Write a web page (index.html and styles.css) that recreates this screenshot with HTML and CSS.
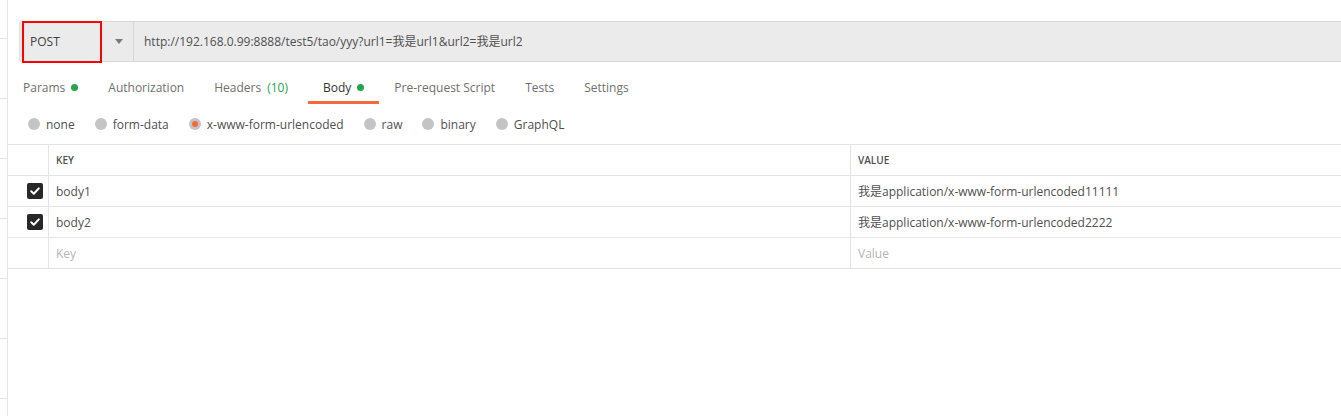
FILE: index.html
```html
<!DOCTYPE html>
<html>
<head>
<meta charset="utf-8">
<link rel="stylesheet" href="styles.css">
</head>
<body>
<div class="app">
  <div class="strip">
    <div class="strip-item first"></div>
    <div class="strip-item"></div>
    <div class="strip-item"></div>
    <div class="strip-item"></div>
    <div class="strip-item"></div>
    <div class="strip-item"></div>
    <div class="strip-item"></div>
  </div>
  <div class="main">
    <div class="urlbar">
      <div class="method">
        <span class="method-text">POST</span>
        <span class="caret"></span>
        <span class="redbox"></span>
      </div>
      <div class="url">http://192.168.0.99:8888/test5/tao/yyy?url1=我是url1&amp;url2=我是url2</div>
    </div>
    <div class="tabs">
      <div class="tab">Params <span class="dot"></span></div>
      <div class="tab">Authorization</div>
      <div class="tab">Headers <span class="green">(10)</span></div>
      <div class="tab active">Body <span class="dot"></span></div>
      <div class="tab">Pre-request Script</div>
      <div class="tab">Tests</div>
      <div class="tab">Settings</div>
    </div>
    <div class="radios">
      <div class="radio"><span class="circle"></span>none</div>
      <div class="radio"><span class="circle"></span>form-data</div>
      <div class="radio"><span class="circle on"></span>x-www-form-urlencoded</div>
      <div class="radio"><span class="circle"></span>raw</div>
      <div class="radio"><span class="circle"></span>binary</div>
      <div class="radio"><span class="circle"></span>GraphQL</div>
    </div>
    <div class="table">
      <div class="row head">
        <div class="c0"></div>
        <div class="c1">KEY</div>
        <div class="c2">VALUE</div>
      </div>
      <div class="row">
        <div class="c0"><span class="check"><svg viewBox="0 0 16 16" width="16" height="16"><path d="M4.2 8.3 L6.8 10.8 L11.8 5.4" fill="none" stroke="#fff" stroke-width="2" stroke-linecap="round" stroke-linejoin="round"/></svg></span></div>
        <div class="c1">body1</div>
        <div class="c2">我是application/x-www-form-urlencoded11111</div>
      </div>
      <div class="row">
        <div class="c0"><span class="check"><svg viewBox="0 0 16 16" width="16" height="16"><path d="M4.2 8.3 L6.8 10.8 L11.8 5.4" fill="none" stroke="#fff" stroke-width="2" stroke-linecap="round" stroke-linejoin="round"/></svg></span></div>
        <div class="c1">body2</div>
        <div class="c2">我是application/x-www-form-urlencoded2222</div>
      </div>
      <div class="row">
        <div class="c0"></div>
        <div class="c1 ph">Key</div>
        <div class="c2 ph">Value</div>
      </div>
    </div>
  </div>
</div>
</body>
</html>
```

FILE: styles.css
```css
* { box-sizing: border-box; }
html, body {
  margin: 0;
  padding: 0;
  background: #fff;
  font-family: "Open Sans", "Noto Sans CJK SC", sans-serif;
  font-size: 12px;
  color: #505050;
}
.app {
  display: flex;
  width: 1341px;
  height: 416px;
  overflow: hidden;
}
.strip {
  width: 8px;
  flex: none;
  border-right: 1px solid #e4e4e4;
}
.strip-item {
  height: 60px;
  border-bottom: 1px solid #e4e4e4;
}
.strip-item.first { height: 39px; }
.main {
  flex: 1;
  min-width: 0;
}
.urlbar {
  margin: 21px 0 0 11px;
  height: 41px;
  display: flex;
  background: #ebebeb;
  border-top: 1px solid #d6d6d6;
  border-bottom: 1px solid #d6d6d6;
  border-left: 1px solid #e0e0e0;
  border-radius: 3px 0 0 3px;
}
.method {
  position: relative;
  width: 114px;
  flex: none;
  display: flex;
  align-items: center;
  padding-left: 10px;
  padding-bottom: 1px;
  border-right: 1px solid #d6d6d6;
}
.method-text {
  color: #404040;
  font-size: 12px;
}
.caret {
  position: absolute;
  left: 95px;
  top: 17px;
  width: 0;
  height: 0;
  border-left: 4px solid transparent;
  border-right: 4px solid transparent;
  border-top: 5px solid #7a7a7a;
}
.redbox {
  position: absolute;
  left: 2px;
  top: -1px;
  width: 80px;
  height: 42px;
  border: 2px solid #f00;
}
.url {
  display: flex;
  align-items: center;
  padding-left: 10px;
  padding-bottom: 1px;
  color: #505050;
  font-size: 12px;
}
.tabs {
  display: flex;
  height: 42px;
  align-items: stretch;
}
.tab {
  padding: 11px 15px 0;
  display: flex;
  align-items: center;
  gap: 6px;
  color: #707070;
  font-size: 12px;
  border-bottom: 3px solid transparent;
}
.tab.active {
  color: #333;
  margin-left: 5px;
  border-bottom-color: #f26b3a;
}
.dot {
  width: 7px;
  height: 7px;
  border-radius: 50%;
  background: #25a54b;
  display: inline-block;
}
.green { color: #25a54b; }
.radios {
  display: flex;
  height: 40px;
  align-items: center;
  padding-left: 20px;
  gap: 20px;
}
.radio {
  display: flex;
  align-items: center;
  gap: 6px;
  color: #505050;
}
.circle {
  width: 12px;
  height: 12px;
  border-radius: 50%;
  background: #c4c4c4;
  display: inline-block;
  position: relative;
}
.circle.on::after {
  content: "";
  position: absolute;
  left: 3px;
  top: 3px;
  width: 6px;
  height: 6px;
  border-radius: 50%;
  background: #f26b3a;
}
.table {
  border-top: 1px solid #e4e4e4;
}
.row {
  display: flex;
  height: 31px;
  border-bottom: 1px solid #e4e4e4;
}
.row > div {
  display: flex;
  align-items: center;
}
.c0 {
  width: 41px;
  flex: none;
  justify-content: flex-end;
  padding-right: 5px;
  border-right: 1px solid #e4e4e4;
}
.c1 {
  width: 802px;
  flex: none;
  padding-left: 7px;
  border-right: 1px solid #e4e4e4;
}
.c2 {
  flex: 1;
  padding-left: 7px;
}
.head {
  font-size: 10px;
  font-weight: 600;
  color: #505050;
}
.ph { color: #b5b5b5; }
.check {
  width: 16px;
  height: 16px;
  border-radius: 2px;
  background: #282828;
  display: inline-block;
}
.check svg { display: block; }
```
